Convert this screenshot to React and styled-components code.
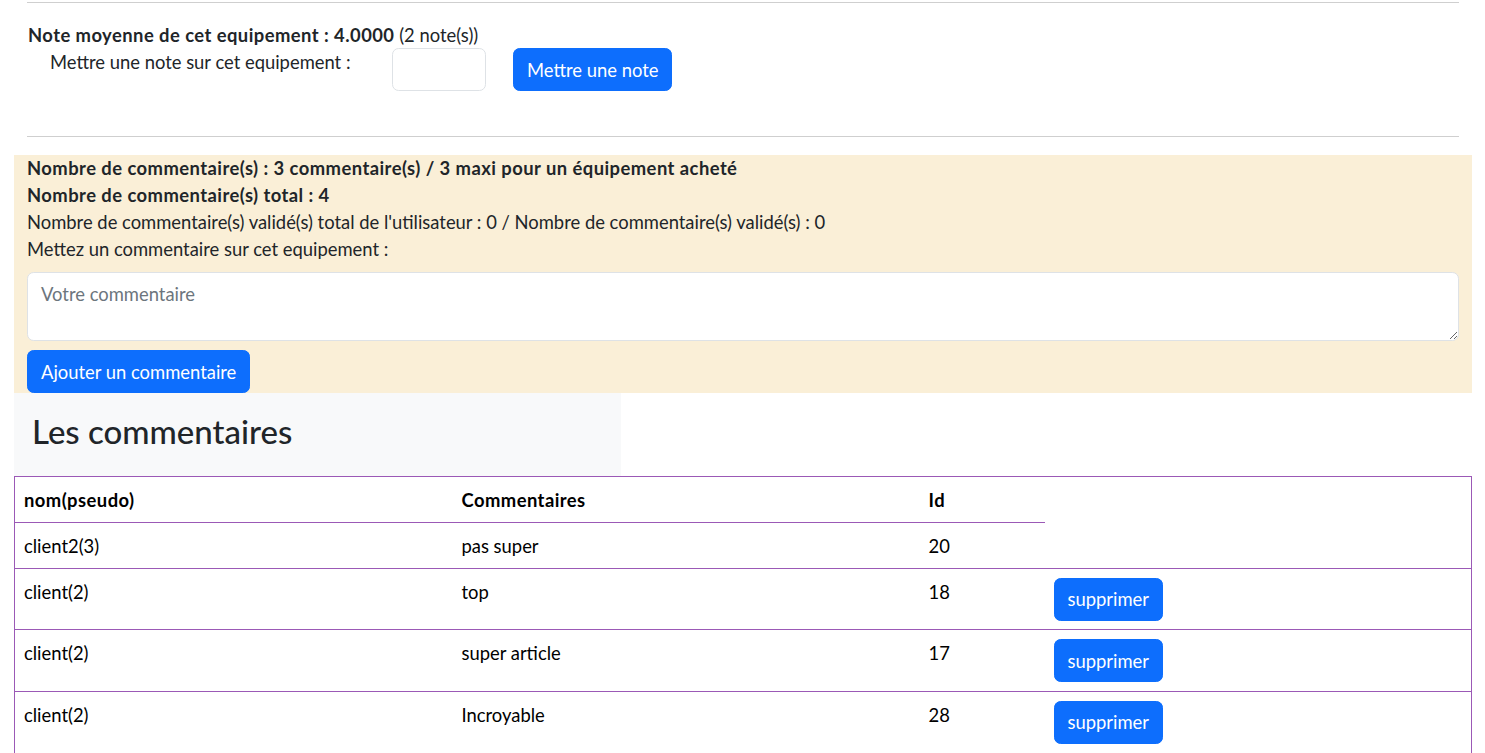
import React from "react";
import styled, { createGlobalStyle } from "styled-components";

const GlobalStyle = createGlobalStyle`
  html, body { margin: 0; padding: 0; background: #fff; }
  body {
    font-family: "Segoe UI", Lato, "Noto Sans", sans-serif;
    font-size: 18.4px;
    line-height: 26.4px;
    color: #212529;
  }
  * { box-sizing: border-box; }
`;

const Page = styled.div`
  padding: 2px 13px 0 14px;
`;

const Divider = styled.div`
  height: 1px;
  background: #cfcfcf;
  margin: 0 13px;
`;

const RatingSection = styled.section`
  padding: 19px 13px 45px 14px;
`;

const Strong = styled.span`
  font-weight: 700;
  letter-spacing: 0.45px;
`;

const Line = styled.div`
  line-height: ${(p) => p.$lh || "26.4px"};
  font-weight: ${(p) => (p.$bold ? 700 : 400)};
  letter-spacing: ${(p) => (p.$bold ? "0.45px" : "normal")};
`;

const RateRow = styled.div`
  display: flex;
  align-items: flex-start;
  padding-left: 22px;
`;

const RateLabel = styled.label`
  width: 342px;
  line-height: 26.4px;
  padding-top: 1px;
`;

const SmallInput = styled.input`
  width: 94px;
  height: 43px;
  border: 1px solid #dee2e6;
  border-radius: 6.6px;
  margin-right: 27px;
  font: inherit;
  padding: 6px 12px;
`;

const Button = styled.button`
  font-family: inherit;
  font-size: 18.4px;
  line-height: 26.4px;
  color: #fff;
  background: #0d6efd;
  border: 1px solid #0d6efd;
  border-radius: 6.6px;
  padding: 7.3px 13px 7.3px;
  cursor: pointer;
  white-space: nowrap;
`;

const CommentSection = styled.section`
  margin-top: 18px;
  background: #faefd7;
  padding: 0 13px;
`;

const TextArea = styled.textarea`
  display: block;
  width: 100%;
  height: 69px;
  margin: 9px 0;
  border: 1px solid #dee2e6;
  border-radius: 6.6px;
  padding: 8px 13px;
  font: inherit;
  color: #212529;
  resize: vertical;
  &::placeholder { color: #6c757d; }
`;

const HeadingBox = styled.div`
  width: 607px;
  height: 83px;
  background: #f8f9fa;
  display: flex;
  align-items: center;
  padding: 0 0 7px 18px;
`;

const Heading = styled.h2`
  margin: 0;
  font-size: 33px;
  font-weight: 500;
  line-height: 1.2;
  color: #212529;
`;

const Table = styled.table`
  width: 100%;
  border-collapse: collapse;
  border: 1px solid #9b59b6;
  color: #000;
`;

const Th = styled.th`
  text-align: left;
  font-weight: 700;
  letter-spacing: 0.45px;
  padding: 10px 9px 8px;
  line-height: 26.4px;
  width: ${(p) => p.$w || "auto"};
  border-bottom: 1px solid #9b59b6;
`;

const Td = styled.td`
  vertical-align: top;
  padding: 9.8px 9px 8.8px 9px;
  line-height: 26.4px;
  border-bottom: 1px solid #9b59b6;
`;

const ButtonCell = styled(Td)`
  padding-top: 8.8px;
  padding-bottom: 8.8px;
`;

const rows = [
  { nom: "client(2)", com: "top", id: 18 },
  { nom: "client(2)", com: "super article", id: 17 },
  { nom: "client(2)", com: "Incroyable", id: 28 },
];

export default function App() {
  return (
    <>
      <GlobalStyle />
      <Page>
        <Divider />
        <RatingSection>
          <Line>
            <Strong>Note moyenne de cet equipement : 4.0000</Strong> (2 note(s))
          </Line>
          <RateRow>
            <RateLabel>Mettre une note sur cet equipement :</RateLabel>
            <SmallInput type="text" />
            <Button>Mettre une note</Button>
          </RateRow>
        </RatingSection>
        <Divider />
        <CommentSection>
          <Line $bold $lh="27px">
            Nombre de commentaire(s) : 3 commentaire(s) / 3 maxi pour un équipement acheté
          </Line>
          <Line $bold $lh="27px">Nombre de commentaire(s) total : 4</Line>
          <Line $lh="27px">
            Nombre de commentaire(s) validé(s) total de l'utilisateur : 0 / Nombre de commentaire(s) validé(s) : 0
          </Line>
          <Line $lh="27px">Mettez un commentaire sur cet equipement :</Line>
          <TextArea placeholder="Votre commentaire" />
          <Button>Ajouter un commentaire</Button>
        </CommentSection>
        <HeadingBox>
          <Heading>Les commentaires</Heading>
        </HeadingBox>
        <Table>
          <thead>
            <tr>
              <Th $w="438px">nom(pseudo)</Th>
              <Th $w="467px">Commentaires</Th>
              <Th $w="125px">Id</Th>
            </tr>
          </thead>
          <tbody>
            <tr>
              <Td>client2(3)</Td>
              <Td>pas super</Td>
              <Td>20</Td>
              <Td />
            </tr>
            {rows.map((r) => (
              <tr key={r.id}>
                <Td>{r.nom}</Td>
                <Td>{r.com}</Td>
                <Td>{r.id}</Td>
                <ButtonCell>
                  <Button>supprimer</Button>
                </ButtonCell>
              </tr>
            ))}
          </tbody>
        </Table>
      </Page>
    </>
  );
}
